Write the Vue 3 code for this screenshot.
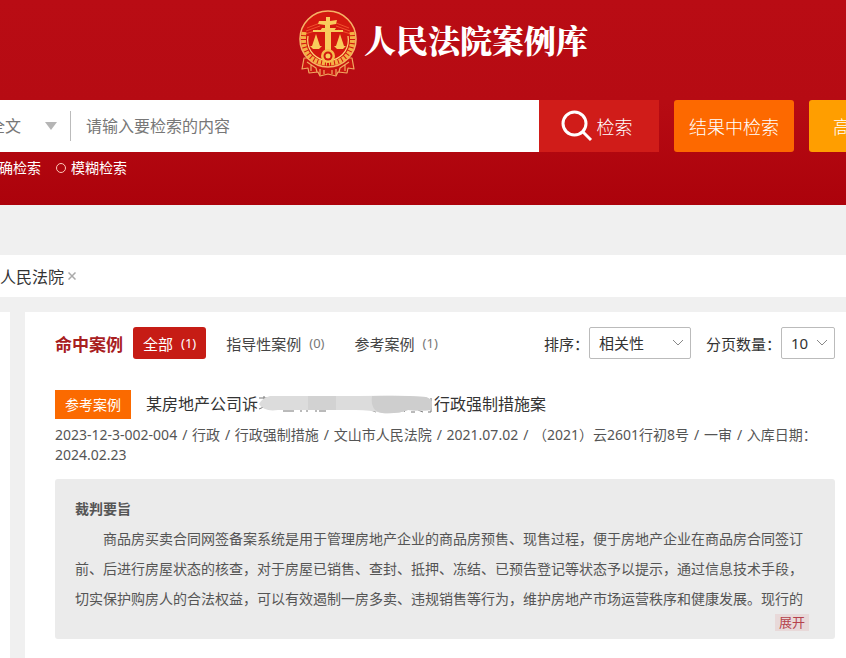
<template>
  <div class="page">
    <header class="header">
      <div class="brand">
        <svg class="emblem" viewBox="0 0 60 68" aria-hidden="true">
          <g fill="#c9150f" stroke="#f0a860" stroke-width="1.2" stroke-linejoin="round">
            <path d="M6 48 L4 59 L10 58 L11 63 L20 62 L22 66 L30 64 L38 66 L40 62 L49 63 L50 58 L56 59 L54 48 Z" />
            <path d="M9 52 L18 58 L19 62 M51 52 L42 58 L41 62 M22 59 V65 M38 59 V65 M13 55 V61 M47 55 V61 M26 60 V64 M34 60 V64" fill="none" />
          </g>
          <circle cx="30" cy="29" r="28" fill="#d3180f" stroke="#f7b266" stroke-width="1.6" />
          <g fill="none" stroke="#f0522c" stroke-width="1">
            <path d="M9 18 L22 13 M8 21 L22 16 M7 24 L20 20 M51 18 L38 13 M52 21 L38 16 M53 24 L40 20" />
          </g>
          <g fill="none" stroke="#f4b045" stroke-width="5" stroke-dasharray="3 1">
            <path d="M6 22 C3 42 13 53 29 53" />
            <path d="M54 22 C57 42 47 53 31 53" />
          </g>
          <g fill="none" stroke="#ffd778" stroke-width="1.2">
            <path d="M10 26 C8 38 15 47 25 50" />
            <path d="M50 26 C52 38 45 47 35 50" />
          </g>
          <g fill="#f9cb5c">
            <path d="M28 7 H32 V11 L39 10 L38 14 L32 15 V18 L38 18 L36 21 H33 V41 H27 V21 H22 L24 18 H27 V15 L20 14 L21 11 H28 Z" />
            <path d="M15 20 H45 V22 H15 Z" />
            <path d="M12 36 H24 L21 39 H15 Z" />
            <path d="M36 36 H48 L45 39 H39 Z" />
            <path d="M18 24 L22 36 H14 Z M42 24 L46 36 H38 Z" />
          </g>
          <circle cx="30" cy="46" r="7" fill="#f6bc4e" />
          <circle cx="30" cy="46" r="4.5" fill="#d3180f" />
          <circle cx="30" cy="46" r="2.5" fill="#f9cb5c" />
        </svg>
        <h1 class="brand-name">人民法院案例库</h1>
      </div>

      <form class="search-row" @submit.prevent>
        <div class="search-box">
          <select v-model="scope" class="scope" aria-label="检索范围">
            <option>全文</option>
          </select>
          <svg class="scope-arrow" viewBox="0 0 12 8" aria-hidden="true">
            <path d="M0 0 H12 L6 8 Z" fill="#b5b5b5" />
          </svg>
          <input v-model="keyword" class="keyword" type="text" placeholder="请输入要检索的内容" aria-label="检索内容" />
        </div>
        <button class="btn btn-search" type="submit">
          <svg class="search-icon" viewBox="0 0 32 32" aria-hidden="true">
            <circle cx="13.5" cy="13.5" r="11.5" />
            <path d="M22 22 L30 30" />
          </svg>
          检索
        </button>
        <button class="btn btn-within" type="button">结果中检索</button>
        <button class="btn btn-advanced" type="button">高级检索</button>
      </form>

      <div class="modes">
        <label v-for="item in modes" :key="item" class="mode">
          <input v-model="mode" type="radio" name="mode" :value="item" />
          <span>{{ item }}</span>
        </label>
      </div>
    </header>

    <div class="filter-bar">
      <span>人民法院</span>
      <button class="remove" type="button" aria-label="移除">
        <svg viewBox="0 0 8 8" aria-hidden="true"><path d="M0.5 0.5 L7.5 7.5 M7.5 0.5 L0.5 7.5" /></svg>
      </button>
    </div>

    <div class="columns">
      <aside class="side"></aside>
      <main class="results">
        <div class="toolbar">
          <h2 class="toolbar-title">命中案例</h2>
          <nav class="tabs">
            <button
              v-for="tab in tabs"
              :key="tab.name"
              class="tab"
              :class="{ active: tab.name === activeTab }"
              type="button"
              @click="activeTab = tab.name"
            >
              {{ tab.name }}<span class="count">({{ tab.count }})</span>
            </button>
          </nav>
          <div class="field">
            <label for="sort">排序：</label>
            <div class="select-wrap">
              <select id="sort" v-model="sort" class="select sort">
                <option>相关性</option>
              </select>
              <svg class="chevron" viewBox="0 0 12 8" aria-hidden="true"><path d="M1 1 L6 6 L11 1" /></svg>
            </div>
          </div>
          <div class="field">
            <label for="size">分页数量：</label>
            <div class="select-wrap">
              <select id="size" v-model="pageSize" class="select size">
                <option>10</option>
              </select>
              <svg class="chevron" viewBox="0 0 12 8" aria-hidden="true"><path d="M1 1 L6 6 L11 1" /></svg>
            </div>
          </div>
        </div>

        <article class="case">
          <div class="case-head">
            <span class="badge">参考案例</span>
            <h3 class="case-title">
              <span>某房地产公司诉</span>
              <svg class="mask" viewBox="0 0 176 20" aria-hidden="true">
                <path d="M1 3 H12 M6 1 V4 M1 14 L8 11 M25 16 H36 M43 13 V17 M49 14 V17 M58 12 V17 M61 16 H68 M113 15 L118 17 M146 17 L150 13 M153 17 H157 M160 15 L165 17 M173 3 V17 H170" fill="none" stroke="#777" />
                <path d="M1 9 Q4 3 12 1 H100 Q140 0 168 2 Q174 4 174 8 L173 15 Q162 16 150 15 Q140 19 124 18 Q112 15 98 15 H20 Q6 17 1 9 Z" fill="#dcdcdc" />
                <path d="M50 1 H78 V15 H50 Z" fill="#d2d2d2" />
                <path d="M114 1 Q145 0 168 2 Q174 4 174 8 L173 15 Q162 16 150 15 Q140 19 124 18 Q112 16 114 1 Z" fill="#cecece" />
              </svg>
              <span>行政强制措施案</span>
            </h3>
          </div>
          <p class="meta">
            <template v-for="(part, i) in meta" :key="part">
              <span v-if="i" class="slash">/</span>
              {{ part }}
            </template>
          </p>
          <section class="summary">
            <h4>裁判要旨</h4>
            <p>{{ summary }}</p>
            <a class="expand" href="#" @click.prevent>展开</a>
          </section>
        </article>
      </main>
    </div>
  </div>
</template>

<script setup>
import { ref } from 'vue';

const scope = ref('全文');
const keyword = ref('');
const modes = ['精确检索', '模糊检索'];
const mode = ref('精确检索');

const tabs = [
  { name: '全部', count: 1 },
  { name: '指导性案例', count: 0 },
  { name: '参考案例', count: 1 },
];
const activeTab = ref('全部');
const sort = ref('相关性');
const pageSize = ref('10');

const meta = [
  '2023-12-3-002-004',
  '行政',
  '行政强制措施',
  '文山市人民法院',
  '2021.07.02',
  '（2021）云2601行初8号',
  '一审',
  '入库日期：2024.02.23',
];
const summary =
  '商品房买卖合同网签备案系统是用于管理房地产企业的商品房预售、现售过程，便于房地产企业在商品房合同签订前、后进行房屋状态的核查，对于房屋已销售、查封、抵押、冻结、已预告登记等状态予以提示，通过信息技术手段，切实保护购房人的合法权益，可以有效遏制一房多卖、违规销售等行为，维护房地产市场运营秩序和健康发展。现行的';
</script>

<style>
body {
  background: #f0f0f0;
}
</style>

<style scoped>
.page {
  display: flex;
  flex-direction: column;
  min-height: 100vh;
  overflow: hidden;
  color: #333;
  font-family: "Noto Sans", "Noto Sans CJK SC", sans-serif;
  font-size: 14px;
}
.page * {
  box-sizing: border-box;
}
h1,
h2,
h3,
h4,
p {
  margin: 0;
}
button,
input,
select {
  font-family: inherit;
}
button {
  cursor: pointer;
}
.header {
  height: 205px;
  background: linear-gradient(#b90c14, #b60b13 50%, #ac020b);
}
.brand {
  display: flex;
  justify-content: center;
  gap: 6px;
  height: 100px;
  padding: 10px 0 0 40px;
}
.emblem {
  width: 60px;
  height: 68px;
}
.brand-name {
  color: #fff;
  font-family: "Noto Serif CJK SC", "Noto Sans CJK SC", serif;
  font-size: 32px;
  font-weight: 900;
  line-height: 58px;
}
.search-row {
  display: flex;
  gap: 15px;
  height: 52px;
  margin-right: -83px;
}
.search-box {
  display: flex;
  flex: 1;
  align-items: center;
  min-width: 0;
  margin: 0 -15px 0 -11px;
  background: #fff;
}
.scope {
  width: 56px;
  padding: 0;
  border: 0;
  appearance: none;
  background: none;
  color: #777;
  font-size: 16px;
}
.scope-arrow {
  width: 12px;
  height: 8px;
}
.keyword {
  flex: 1;
  min-width: 0;
  height: 30px;
  margin-left: 13px;
  padding: 0 15px;
  border: 0;
  border-left: 1px solid #bbb;
  outline: none;
  background: none;
  font-size: 16px;
}
.keyword::placeholder {
  color: #777;
}
.btn {
  flex: none;
  width: 120px;
  padding: 0;
  border: 0;
  border-radius: 3px;
  color: #fff;
  font-size: 18px;
  font-weight: 300;
}
.btn-search {
  display: flex;
  align-items: center;
  justify-content: center;
  gap: 4px;
  padding-right: 5px;
  border-radius: 0;
  background: #d01c19;
}
.search-icon {
  width: 32px;
  height: 32px;
  fill: none;
  stroke: #fff;
  stroke-width: 3;
}
.btn-within {
  background: #fd6900;
}
.btn-advanced {
  background: #ff9e00;
}
.modes {
  display: flex;
  gap: 15px;
  margin-left: -30px;
  padding-top: 6px;
}
.mode {
  display: flex;
  align-items: center;
  gap: 5px;
  color: #fff;
  line-height: 20px;
}
.mode input {
  width: 10px;
  height: 10px;
  margin: 0;
  border: 1px solid #ffc8b8;
  border-radius: 50%;
  appearance: none;
}
.mode input:checked {
  background: #fff;
}
.filter-bar {
  display: flex;
  align-items: center;
  gap: 4px;
  height: 42px;
  margin: 50px 0 15px;
  background: #fff;
  font-size: 16px;
}
.remove {
  display: flex;
  padding: 0;
  border: 0;
  background: none;
}
.remove svg {
  width: 8px;
  height: 8px;
  stroke: #aaa;
  stroke-width: 1.5;
}
.columns {
  display: flex;
  flex: 1;
  gap: 15px;
}
.side {
  width: 10px;
  background: #fff;
}
.results {
  flex: 1;
  min-width: 0;
  padding: 15px 11px 19px 30px;
  background: #fff;
}
.toolbar {
  display: flex;
  align-items: center;
  gap: 15px;
  height: 32px;
  font-size: 15px;
}
.toolbar-title {
  margin-right: -5px;
  color: #a8201f;
  font-size: 17px;
}
.tabs {
  display: flex;
  flex: 1;
  gap: 10px;
}
.tab {
  display: flex;
  align-items: center;
  gap: 8px;
  height: 32px;
  padding: 0 10px;
  border: 0;
  border-radius: 3px;
  background: none;
  color: #444;
  font-size: 15px;
  white-space: nowrap;
}
.tab.active {
  background: #c61c15;
  color: #fff;
}
.count {
  color: #777;
  font-size: 13px;
}
.active .count {
  color: #fff;
}
.field {
  display: flex;
  align-items: center;
  white-space: nowrap;
}
.select-wrap {
  position: relative;
}
.select {
  display: block;
  height: 32px;
  padding: 0 9px;
  border: 1px solid #bbb;
  border-radius: 2px;
  appearance: none;
  background: #fff;
  color: #333;
  font-size: 15px;
}
.sort {
  width: 102px;
}
.size {
  width: 54px;
}
.chevron {
  position: absolute;
  top: 12px;
  right: 7px;
  width: 12px;
  height: 8px;
  fill: none;
  stroke: #888;
  pointer-events: none;
}
.case {
  margin-top: 31px;
}
.case-head {
  display: flex;
  align-items: center;
  gap: 15px;
}
.badge {
  padding: 0 10px;
  background: #fb6a00;
  color: #fff;
  line-height: 29px;
}
.case-title {
  display: flex;
  align-items: center;
  font-size: 16px;
  font-weight: 400;
  line-height: 29px;
}
.mask {
  width: 176px;
  height: 20px;
}
.meta {
  margin: 6px 0 14px;
  color: #555;
  line-height: 20px;
}
.slash {
  margin: 0 1px 0 5px;
}
.summary {
  display: flex;
  flex-direction: column;
  padding: 15px 20px 8px;
  border-radius: 3px;
  background: #ebebeb;
  color: #555;
  line-height: 30px;
}
.summary h4 {
  font-size: 14px;
}
.summary p {
  width: 100%;
  text-indent: 2em;
}
.expand {
  align-self: flex-end;
  margin-right: 6px;
  padding: 0 4px;
  background: #e8d9d9;
  color: #b5424c;
  font-size: 13px;
  line-height: 17px;
  text-decoration: none;
}
</style>
